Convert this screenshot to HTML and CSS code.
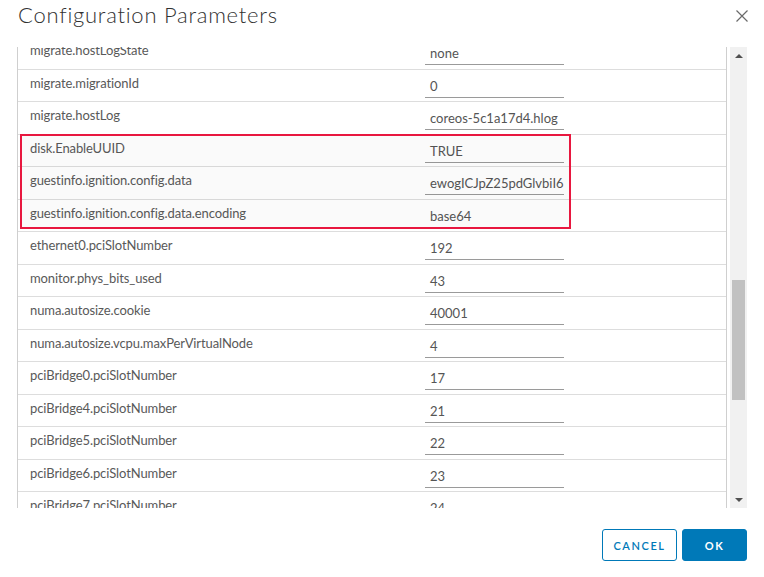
FILE: index.html
```html
<!DOCTYPE html>
<html>
<head>
<meta charset="utf-8">
<link rel="stylesheet" href="styles.css">
</head>
<body>
<div class="modal">
  <div class="header">
    <h1 class="title">Configuration Parameters</h1>
    <svg class="close" width="12" height="12" viewBox="0 0 12 12"><path d="M0.5 0.5 L11.5 11.5 M11.5 0.5 L0.5 11.5" stroke="#6a6a6a" stroke-width="1.2" fill="none"/></svg>
  </div>
  <div class="content">
    <div class="grid">
      <div class="rows">
        <div class="row"><div class="label">migrate.hostLogState</div><div class="value">none</div></div>
        <div class="row"><div class="label">migrate.migrationId</div><div class="value">0</div></div>
        <div class="row"><div class="label">migrate.hostLog</div><div class="value">coreos-5c1a17d4.hlog</div></div>
        <div class="row"><div class="label">disk.EnableUUID</div><div class="value">TRUE</div></div>
        <div class="row"><div class="label">guestinfo.ignition.config.data</div><div class="value">ewogICJpZ25pdGlvbiI6ICB7CiAgICAidmVyc2lvbiI6</div></div>
        <div class="row"><div class="label">guestinfo.ignition.config.data.encoding</div><div class="value">base64</div></div>
        <div class="row"><div class="label">ethernet0.pciSlotNumber</div><div class="value">192</div></div>
        <div class="row"><div class="label">monitor.phys_bits_used</div><div class="value">43</div></div>
        <div class="row"><div class="label">numa.autosize.cookie</div><div class="value">40001</div></div>
        <div class="row"><div class="label">numa.autosize.vcpu.maxPerVirtualNode</div><div class="value">4</div></div>
        <div class="row"><div class="label">pciBridge0.pciSlotNumber</div><div class="value">17</div></div>
        <div class="row"><div class="label">pciBridge4.pciSlotNumber</div><div class="value">21</div></div>
        <div class="row"><div class="label">pciBridge5.pciSlotNumber</div><div class="value">22</div></div>
        <div class="row"><div class="label">pciBridge6.pciSlotNumber</div><div class="value">23</div></div>
        <div class="row"><div class="label">pciBridge7.pciSlotNumber</div><div class="value">24</div></div>
      </div>
      <div class="highlight"></div>
    </div>
    <div class="scrollbar">
      <div class="arrow up"></div>
      <div class="track"><div class="thumb"></div></div>
      <div class="arrow down"></div>
    </div>
  </div>
  <div class="footer">
    <button class="btn btn-outline">CANCEL</button>
    <button class="btn btn-primary">OK</button>
  </div>
</div>
</body>
</html>
```
FILE: styles.css
```css
html, body {
  margin: 0;
  padding: 0;
  background: #fff;
}
body {
  font-family: "Lato", "Open Sans", sans-serif;
  color: #565656;
}
.modal {
  width: 764px;
  height: 577px;
}
.header {
  height: 47px;
  display: flex;
  justify-content: space-between;
  align-items: flex-start;
  padding: 0 18px 0 18px;
  box-sizing: border-box;
}
.title {
  margin: 0;
  padding-top: 1px;
  font-size: 22px;
  line-height: 28px;
  font-weight: 300;
  color: #313131;
  letter-spacing: 0.75px;
}
.close {
  margin-top: 10px;
  margin-right: -2px;
}
.content {
  display: flex;
  margin-left: 17px;
  width: 730px;
  height: 461px;
  gap: 3px;
}
.grid {
  position: relative;
  flex: 0 0 710px;
  height: 461px;
  border-left: 1px solid #cfcfcf;
  border-right: 1px solid #cfcfcf;
  box-sizing: border-box;
  overflow: hidden;
}
.rows {
  margin-top: -10px;
}
.row {
  display: grid;
  grid-template-columns: 407px 139px;
  height: 32.5px;
  box-sizing: border-box;
  border-bottom: 1px solid #dddddd;
}
.label {
  padding-left: 12px;
  padding-top: 5px;
  font-size: 13px;
  line-height: 16px;
  letter-spacing: -0.1px;
  color: #595959;
  white-space: nowrap;
}
.value {
  margin-top: 6px;
  height: 22px;
  box-sizing: border-box;
  border-bottom: 1px solid #9a9a9a;
  padding-left: 5px;
  padding-top: 2px;
  font-size: 13px;
  line-height: 16px;
  color: #555555;
  white-space: nowrap;
  overflow: hidden;
}
.highlight {
  position: absolute;
  left: 2px;
  top: 87px;
  width: 551px;
  height: 95px;
  box-sizing: border-box;
  border: 2px solid #e8173f;
  background: rgba(0, 0, 0, 0.018);
  pointer-events: none;
}
.scrollbar {
  flex: 0 0 17px;
  background: #f1f1f1;
  display: flex;
  flex-direction: column;
}
.arrow {
  height: 17px;
  display: flex;
  align-items: center;
  justify-content: center;
}
.arrow.up::before {
  content: "";
  border-left: 4px solid transparent;
  border-right: 4px solid transparent;
  border-bottom: 4px solid #505050;
}
.arrow.down::before {
  content: "";
  border-left: 4px solid transparent;
  border-right: 4px solid transparent;
  border-top: 4px solid #505050;
}
.track {
  flex: 1;
  padding-top: 216px;
}
.thumb {
  margin-left: 2px;
  width: 13px;
  height: 120px;
  background: #c1c1c1;
}
.footer {
  display: flex;
  justify-content: flex-end;
  gap: 5px;
  padding-top: 21px;
  padding-right: 17px;
}
.btn {
  height: 32px;
  box-sizing: border-box;
  border-radius: 3px;
  font-family: "Lato", "Open Sans", sans-serif;
  font-size: 11px;
  font-weight: 600;
  letter-spacing: 1.6px;
  padding: 0;
  cursor: pointer;
}
.btn-outline {
  width: 75px;
  background: #fff;
  border: 1px solid #0079b8;
  color: #0079b8;
}
.btn-primary {
  width: 65px;
  background: #0079b8;
  border: 1px solid #0079b8;
  color: #fff;
  font-weight: 700;
}
```
